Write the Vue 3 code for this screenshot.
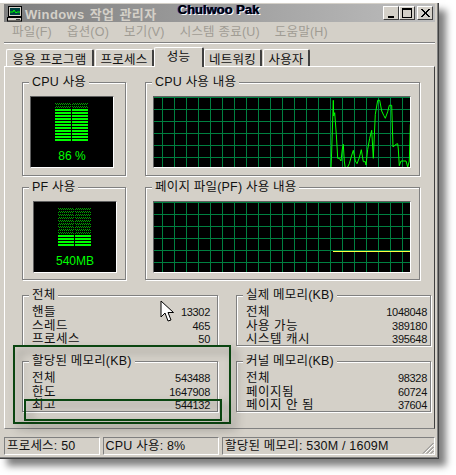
<script setup>
const raw = [[30,262],[32,210],[37,58],[38,105],[41,95],[43,120],[46,160],[49,210],[50,232],[55,232],[60,240],[64,205],[67,190],[70,240],[73,262],[80,258],[85,248],[90,230],[97,208],[103,240],[108,248],[115,230],[121,206],[127,242],[133,242],[135,252],[140,205],[146,172],[152,148],[157,232],[163,100],[170,58],[176,58],[182,90],[188,103],[193,112],[200,92],[205,73],[212,73],[216,198],[225,190],[230,188],[232,204],[235,254],[240,240],[255,240],[260,258],[265,240],[268,130]]
const cpuLine = raw.map(([x, y]) => `${(167 + x / 3).toFixed(1)},${(y / 3 - 16).toFixed(1)}`).join(' ')
const vLines = Array.from({ length: 22 }, (_, i) => 8.5 + i * 12)
const hLines = Array.from({ length: 6 }, (_, i) => 0.5 + i * 12)

const cpuDim = [0, 3]
const cpuLit = Array.from({ length: 11 }, (_, i) => 6 + i * 3)
const pfDim = Array.from({ length: 9 }, (_, i) => i * 3)
const pfLit = [27, 30, 33, 36]

const tabs = [
  { label: '응용 프로그램', w: 88 },
  { label: '프로세스', w: 59 },
  { label: '성능', w: 50, active: true },
  { label: '네트워킹', w: 58 },
  { label: '사용자', w: 47 }
]
const menus = ['파일(F)', '옵션(O)', '보기(V)', '시스템 종료(U)', '도움말(H)']

const leftStats = [
  { title: '전체', rows: [['핸들', '13302'], ['스레드', '465'], ['프로세스', '50']] },
  { title: '할당된 메모리(KB)', rows: [['전체', '543488'], ['한도', '1647908'], ['최고', '544132']] }
]
const rightStats = [
  { title: '실제 메모리(KB)', rows: [['전체', '1048048'], ['사용 가능', '389180'], ['시스템 캐시', '395648']] },
  { title: '커널 메모리(KB)', rows: [['전체', '98328'], ['페이지됨', '60724'], ['페이지 안 됨', '37604']] }
]
</script>

<template>
  <div class="page">
    <div class="window">
      <div class="titlebar">
        <svg class="appicon" width="16" height="16" viewBox="0 0 16 16">
          <rect x="1.5" y="0.5" width="13" height="10" fill="#d4d0c8" stroke="#000" />
          <rect x="3" y="2" width="10" height="7" fill="#004040" />
          <path d="M3 6h3l1-2 2 3 1-1h3" fill="none" stroke="#00ff00" />
          <rect x="0.5" y="11.5" width="14" height="3.5" fill="#d4d0c8" stroke="#000" />
          <rect x="9" y="13" width="4" height="1" fill="#404040" />
        </svg>
        <span class="titletext">Windows 작업 관리자</span>
        <div class="capbtns">
          <span class="capbtn"><svg width="14" height="12" viewBox="0 0 14 12"><rect x="4" y="9" width="6" height="2" fill="#000" /></svg></span>
          <span class="capbtn"><svg width="14" height="12" viewBox="0 0 14 12"><rect x="2.5" y="1.5" width="9" height="9" fill="none" stroke="#000" /><rect x="2" y="1" width="10" height="2" fill="#000" /></svg></span>
          <span class="capbtn closebtn"><svg width="14" height="12" viewBox="0 0 14 12"><path d="M3 2l8 8M4 2l8 8M11 2l-8 8M12 2l-8 8" stroke="#000" fill="none" /></svg></span>
        </div>
      </div>

      <div class="menubar">
        <span v-for="m in menus" :key="m" class="menuitem">{{ m }}</span>
      </div>

      <div class="tabs">
        <span v-for="t in tabs" :key="t.label" class="tab" :class="{ active: t.active }" :style="{ width: t.w + 'px' }">{{ t.label }}</span>
      </div>

      <div class="panel">
        <div class="toprow">
          <div class="group meter-group">
            <span class="legend">CPU 사용</span>
            <div class="screen screen-cpu">
              <svg width="34" height="39" viewBox="0 0 34 39" shape-rendering="crispEdges">
                <defs>
                  <pattern id="chk" width="2" height="2" patternUnits="userSpaceOnUse">
                    <rect width="1" height="1" fill="#00a000" />
                    <rect x="1" y="1" width="1" height="1" fill="#00a000" />
                  </pattern>
                </defs>
                <g v-for="y in cpuDim" :key="'d' + y">
                  <rect x="0" :y="y" width="16" height="2" fill="url(#chk)" />
                  <rect x="17" :y="y" width="16" height="2" fill="url(#chk)" />
                </g>
                <g v-for="y in cpuLit" :key="'l' + y">
                  <rect x="0" :y="y" width="16" height="2" fill="#00ff00" />
                  <rect x="17" :y="y" width="16" height="2" fill="#00ff00" />
                </g>
              </svg>
              <span class="meterval">86 %</span>
            </div>
          </div>
          <div class="group hist-group">
            <span class="legend">CPU 사용 내용</span>
            <div class="graph">
              <svg width="256" height="70" viewBox="0 0 256 70">
                <g stroke="#008040" stroke-width="1" shape-rendering="crispEdges">
                  <line v-for="x in vLines" :key="'v' + x" :x1="x" y1="0" :x2="x" y2="70" />
                  <line v-for="y in hLines" :key="'h' + y" x1="0" :y1="y" x2="256" :y2="y" />
                </g>
                <polyline :points="cpuLine" fill="none" stroke="#00ff00" stroke-width="1" />
              </svg>
            </div>
          </div>
        </div>

        <div class="toprow second">
          <div class="group meter-group pf">
            <span class="legend">PF 사용</span>
            <div class="screen screen-pf">
              <svg width="34" height="39" viewBox="0 0 34 39" shape-rendering="crispEdges">
                <g v-for="y in pfDim" :key="'pd' + y">
                  <rect x="0" :y="y" width="16" height="2" fill="url(#chk)" />
                  <rect x="17" :y="y" width="16" height="2" fill="url(#chk)" />
                </g>
                <g v-for="y in pfLit" :key="'pl' + y">
                  <rect x="0" :y="y" width="16" height="2" fill="#00ff00" />
                  <rect x="17" :y="y" width="16" height="2" fill="#00ff00" />
                </g>
              </svg>
              <span class="meterval">540MB</span>
            </div>
          </div>
          <div class="group hist-group pf">
            <span class="legend">페이지 파일(PF) 사용 내용</span>
            <div class="graph">
              <svg width="256" height="70" viewBox="0 0 256 70">
                <g stroke="#008040" stroke-width="1" shape-rendering="crispEdges">
                  <line v-for="x in vLines" :key="'v' + x" :x1="x" y1="0" :x2="x" y2="70" />
                  <line v-for="y in hLines" :key="'h' + y" x1="0" :y1="y" x2="256" :y2="y" />
                </g>
                <line x1="179" y1="49.5" x2="256" y2="49.5" stroke="#ffff40" stroke-width="1" shape-rendering="crispEdges" />
              </svg>
            </div>
          </div>
        </div>

        <div class="statgrid">
          <div class="statcol leftcol">
            <div v-for="g in leftStats" :key="g.title" class="group statgroup">
              <span class="legend">{{ g.title }}</span>
              <div v-for="r in g.rows" :key="r[0]" class="statrow"><span>{{ r[0] }}</span><span class="num">{{ r[1] }}</span></div>
            </div>
          </div>
          <div class="statcol">
            <div v-for="g in rightStats" :key="g.title" class="group statgroup">
              <span class="legend">{{ g.title }}</span>
              <div v-for="r in g.rows" :key="r[0]" class="statrow"><span>{{ r[0] }}</span><span class="num">{{ r[1] }}</span></div>
            </div>
          </div>
        </div>
      </div>

      <div class="statusbar">
        <span class="cell c1">프로세스: 50</span>
        <span class="cell c2">CPU 사용: 8%</span>
        <span class="cell c3">할당된 메모리: 530M / 1609M
          <svg class="grip" width="12" height="12" viewBox="0 0 12 12">
            <path d="M11.5 1L1 11.5M11.5 5L5 11.5M11.5 9L9 11.5" stroke="#808080" fill="none" />
            <path d="M11.5 2.5L2.5 11.5M11.5 6.5L6.5 11.5M11.5 10.5L10.5 11.5" stroke="#fff" fill="none" />
          </svg>
        </span>
      </div>
    </div>

    <span class="author">Chulwoo Pak</span>
    <svg class="cursor" width="14" height="23" viewBox="0 0 14 23">
      <path d="M1 1V17L5 13L8 21L11 20L8 12.5H13.5Z" fill="#fff" stroke="#000" stroke-width="1" />
    </svg>
    <div class="mark mark-big"></div>
    <div class="mark mark-small"></div>
  </div>
</template>

<style>
html, body { margin: 0; background: #fff; }
</style>

<style scoped>
.page {
  position: relative;
  width: 456px;
  height: 475px;
  padding-top: 3px;
  box-sizing: border-box;
  overflow: hidden;
  font-family: "Liberation Sans", "Noto Sans CJK KR", sans-serif;
  font-size: 12.5px;
  letter-spacing: 0.2px;
  color: #111;
}
.window {
  width: 439px;
  height: 456px;
  box-sizing: border-box;
  background: #d4d0c8;
  padding: 1px 3px 0 4px;
  border-right: 1px solid #404040;
  border-bottom: 1px solid #404040;
  box-shadow: inset -1px -1px 0 #808080, 7px 7px 7px rgba(0, 0, 0, 0.5);
  display: flex;
  flex-direction: column;
}
.titlebar {
  height: 18px;
  flex: none;
  display: flex;
  align-items: center;
  padding: 0 2px 0 3px;
  background: linear-gradient(90deg, #7f7f7f, #bdbdbd);
}
.appicon { flex: none; margin-right: 2px; margin-top: 1px; }
.titletext {
  color: #d4d0c8;
  font-weight: 700;
  font-size: 13px;
  letter-spacing: 0.4px;
  word-spacing: 1px;
  white-space: nowrap;
}
.capbtns { margin-left: auto; display: flex; }
.capbtn {
  width: 16px;
  height: 14px;
  box-sizing: border-box;
  display: flex;
  align-items: center;
  justify-content: center;
  background: #d4d0c8;
  border: 1px solid;
  border-color: #fff #404040 #404040 #fff;
}
.closebtn { margin-left: 2px; }
.menubar {
  height: 21px;
  flex: none;
  box-sizing: border-box;
  display: flex;
  gap: 15px;
  align-items: center;
  padding: 0 0 3px 8px;
  color: #a09c94;
  white-space: nowrap;
  border-bottom: 1px solid #808080;
  box-shadow: 0 1px 0 #fff;
}
.tabs {
  display: flex;
  align-items: flex-end;
  height: 23px;
  flex: none;
  padding-left: 2px;
  gap: 1px;
  position: relative;
  z-index: 1;
}
.tab {
  height: 17px;
  box-sizing: border-box;
  flex: none;
  display: flex;
  align-items: center;
  justify-content: center;
  white-space: nowrap;
  border-top: 1px solid #fff;
  border-left: 1px solid #fff;
  border-right: 2px solid #404040;
  border-radius: 2px 2px 0 0;
}
.tab.active {
  height: 20px;
  margin-bottom: -1px;
  margin-left: -1px;
  margin-right: -1px;
  background: #d4d0c8;
  padding-bottom: 4px;
}
.panel {
  height: 363px;
  flex: none;
  box-sizing: border-box;
  border: 1px solid;
  border-color: #fff #404040 #808080 #fff;
  padding: 15px 0 0 17px;
  width: 431px;
}
.toprow {
  display: flex;
  gap: 19px;
  height: 94px;
}
.toprow.second { margin-top: 11px; height: 93px; }
.group {
  position: relative;
  box-sizing: border-box;
  border: 1px solid #808080;
  box-shadow: inset 1px 1px 0 #fff, 1px 1px 0 #fff;
}
.legend {
  position: absolute;
  top: -8px;
  left: 6px;
  height: 14px;
  line-height: 14px;
  padding: 0 3px;
  background: #d4d0c8;
  white-space: nowrap;
}
.meter-group { width: 104px; height: 100%; }
.hist-group { width: 275px; height: 100%; padding: 13px 0 0 7px; }
.screen {
  box-sizing: border-box;
  width: 84px;
  height: 72px;
  background: #000;
  border: 1px solid;
  border-color: #606060 #fff #fff #606060;
  display: flex;
  flex-direction: column;
  align-items: center;
  padding-top: 6px;
}
.screen-cpu { margin: 13px 0 0 7px; }
.screen-pf { margin: 13px 0 0 10px; }
.meterval {
  color: #00ff00;
  margin-top: 7px;
  font-size: 12px;
  line-height: 14px;
  letter-spacing: 0;
  white-space: nowrap;
}
.graph {
  box-sizing: border-box;
  width: 258px;
  height: 72px;
  background: #000;
  border: 1px solid;
  border-color: #606060 #fff #fff #606060;
  display: flex;
}
.statgrid {
  display: flex;
  gap: 18px;
  margin: 15px 0 0 0;
}
.statcol { width: 195px; display: flex; flex-direction: column; gap: 15px; }
.leftcol { width: 196px; }
.statgroup { height: 51px; padding: 10px 3px 0 9px; }
.leftcol .statgroup { padding-right: 7px; }
.statrow {
  display: flex;
  justify-content: space-between;
  height: 13.5px;
  line-height: 13.5px;
  white-space: nowrap;
  letter-spacing: 0.5px;
}
.num { font-size: 11px; letter-spacing: -0.3px; }
.statusbar {
  display: flex;
  gap: 3px;
  margin-top: 8px;
  height: 18px;
  flex: none;
}
.cell {
  box-sizing: border-box;
  height: 18px;
  line-height: 16px;
  padding-left: 2px;
  position: relative;
  white-space: nowrap;
  border: 1px solid;
  border-color: #808080 #fff #fff #808080;
}
.c1 { width: 96px; }
.c2 { width: 117px; }
.c3 { width: 214px; }
.grip { position: absolute; right: 0; bottom: 0; }
.author {
  position: absolute;
  left: 178px;
  top: 2px;
  font-weight: 700;
  font-size: 13px;
  letter-spacing: 0;
  color: #000;
  white-space: nowrap;
  text-shadow: -1px 0 0 #1a2a8a, 1px 1px 0 #fff;
}
.cursor { position: absolute; left: 160px; top: 300px; }
.mark {
  position: absolute;
  box-sizing: border-box;
  border: 2px solid #0a4510;
  filter: drop-shadow(5px 5px 4px rgba(0, 0, 0, 0.4));
}
.mark-big { left: 13px; top: 345px; width: 218px; height: 79px; }
.mark-small { left: 24px; top: 399px; width: 198px; height: 22px; }
</style>
